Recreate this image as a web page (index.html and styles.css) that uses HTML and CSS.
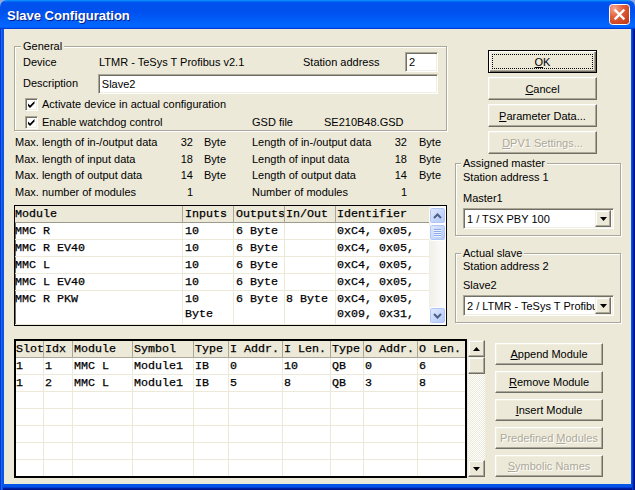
FILE: index.html
```html
<!DOCTYPE html>
<html>
<head>
<meta charset="utf-8">
<title>Slave Configuration</title>
<link rel="stylesheet" href="styles.css">
</head>
<body>
<div class="window">
  <div class="titlebar">
    <span class="title">Slave Configuration</span>
    <span class="close">
      <svg width="21" height="21" viewBox="0 0 21 21">
        <defs>
          <radialGradient id="cg" cx="0.25" cy="0.2" r="0.95">
            <stop offset="0" stop-color="#F4A88E"/>
            <stop offset="0.45" stop-color="#E25E3A"/>
            <stop offset="1" stop-color="#C23A18"/>
          </radialGradient>
        </defs>
        <rect x="0.5" y="0.5" width="20" height="20" rx="3" fill="url(#cg)" stroke="#fff"/>
        <path d="M6.5 6.5L14.5 14.5M14.5 6.5L6.5 14.5" stroke="#fff" stroke-width="2.4" stroke-linecap="square"/>
      </svg>
    </span>
  </div>
  <div class="frame">
    <div class="client">
      <div class="top">
        <div class="leftcol">
          <div class="group general">
            <span class="legend">General</span>
            <div class="grow">
              <span class="g-lbl">Device</span>
              <span class="g-val">LTMR - TeSys T Profibus v2.1</span>
              <span class="g-st">Station address</span>
              <span class="field st-field">2</span>
            </div>
            <div class="grow second">
              <span class="g-lbl2">Description</span>
              <span class="field desc-field">Slave2</span>
            </div>
            <div class="crow first">
              <span class="chk"><svg width="9" height="9" viewBox="0 0 9 9"><path d="M1 3.5L3 5.5L7.5 1V3.5L3 8L1 6Z" fill="#000"/></svg></span>
              <span>Activate device in actual configuration</span>
            </div>
            <div class="crow">
              <span class="chk"><svg width="9" height="9" viewBox="0 0 9 9"><path d="M1 3.5L3 5.5L7.5 1V3.5L3 8L1 6Z" fill="#000"/></svg></span>
              <span class="wd">Enable watchdog control</span>
              <span class="gsd">GSD file</span>
              <span>SE210B48.GSD</span>
            </div>
          </div>

          <div class="stats">
            <span>Max. length of in-/output data</span><span class="n">32</span><span class="by">Byte</span>
            <span>Length of in-/output data</span><span class="n">32</span><span class="by2">Byte</span>
            <span>Max. length of input data</span><span class="n">18</span><span class="by">Byte</span>
            <span>Length of input data</span><span class="n">18</span><span class="by2">Byte</span>
            <span>Max. length of output data</span><span class="n">14</span><span class="by">Byte</span>
            <span>Length of output data</span><span class="n">14</span><span class="by2">Byte</span>
            <span>Max. number of modules</span><span class="n">1</span><span class="by"></span>
            <span>Number of modules</span><span class="n">1</span><span class="by2"></span>
          </div>

          <div class="list">
            <div class="lv">
              <div class="lr lh"><span>Module</span><span>Inputs</span><span>Outputs</span><span>In/Out</span><span>Identifier</span></div>
              <div class="lr"><span>MMC R</span><span>10</span><span>6 Byte</span><span></span><span>0xC4, 0x05,</span></div>
              <div class="lr"><span>MMC R EV40</span><span>10</span><span>6 Byte</span><span></span><span>0xC4, 0x05,</span></div>
              <div class="lr"><span>MMC L</span><span>10</span><span>6 Byte</span><span></span><span>0xC4, 0x05,</span></div>
              <div class="lr"><span>MMC L EV40</span><span>10</span><span>6 Byte</span><span></span><span>0xC4, 0x05,</span></div>
              <div class="lr tall"><span>MMC R PKW</span><span>10<br>Byte</span><span>6 Byte</span><span>8 Byte</span><span>0xC4, 0x05,<br>0x09, 0x31,</span></div>
            </div>
            <div class="xps">
              <div class="xb"><svg width="9" height="6" viewBox="0 0 9 6"><path d="M1 5L4.5 1.5L8 5" fill="none" stroke="#4D6185" stroke-width="2"/></svg></div>
              <div class="xb thumb"><span></span><span></span><span></span><span></span></div>
              <div class="xtrack"></div>
              <div class="xb"><svg width="9" height="6" viewBox="0 0 9 6"><path d="M1 1L4.5 4.5L8 1" fill="none" stroke="#4D6185" stroke-width="2"/></svg></div>
            </div>
          </div>
        </div>

        <div class="rightcol">
          <div class="btns">
            <div class="btn default"><span class="focus"><u>O</u>K</span></div>
            <div class="btn"><span><u>C</u>ancel</span></div>
            <div class="btn"><span><u>P</u>arameter Data...</span></div>
            <div class="btn disabled"><span><u>D</u>PV1 Settings...</span></div>
          </div>
          <div class="group side master">
            <span class="legend">Assigned master</span>
            <div class="sline">Station address 1</div>
            <div class="sline l2">Master1</div>
            <div class="combo">
              <span class="ctext">1 / TSX PBY 100</span>
              <span class="cbtn"><svg width="7" height="4" viewBox="0 0 7 4"><path d="M0 0H7L3.5 4Z" fill="#000"/></svg></span>
            </div>
          </div>
          <div class="group side slave">
            <span class="legend">Actual slave</span>
            <div class="sline">Station address 2</div>
            <div class="sline l2">Slave2</div>
            <div class="combo">
              <span class="ctext">2 / LTMR - TeSys T Profibus v2.1</span>
              <span class="cbtn"><svg width="7" height="4" viewBox="0 0 7 4"><path d="M0 0H7L3.5 4Z" fill="#000"/></svg></span>
            </div>
          </div>
        </div>
      </div>

      <div class="bottom">
        <div class="grid">
          <div class="gr gh"><span>Slot</span><span>Idx</span><span>Module</span><span>Symbol</span><span>Type</span><span>I Addr.</span><span>I Len.</span><span>Type</span><span>O Addr.</span><span>O Len.</span></div>
          <div class="gr"><span>1</span><span>1</span><span>MMC L</span><span>Module1</span><span>IB</span><span>0</span><span>10</span><span>QB</span><span>0</span><span>6</span></div>
          <div class="gr"><span>1</span><span>2</span><span>MMC L</span><span>Module1</span><span>IB</span><span>5</span><span>8</span><span>QB</span><span>3</span><span>8</span></div>
          <div class="gr"><span></span><span></span><span></span><span></span><span></span><span></span><span></span><span></span><span></span><span></span></div>
          <div class="gr"><span></span><span></span><span></span><span></span><span></span><span></span><span></span><span></span><span></span><span></span></div>
          <div class="gr"><span></span><span></span><span></span><span></span><span></span><span></span><span></span><span></span><span></span><span></span></div>
          <div class="gr"><span></span><span></span><span></span><span></span><span></span><span></span><span></span><span></span><span></span><span></span></div>
          <div class="gr"><span></span><span></span><span></span><span></span><span></span><span></span><span></span><span></span><span></span><span></span></div>
        </div>
        <div class="cscroll">
          <div class="cb"><svg width="7" height="4" viewBox="0 0 7 4"><path d="M3.5 0L7 4H0Z" fill="#000"/></svg></div>
          <div class="cb"></div>
          <div class="ctrack"></div>
          <div class="cb"><svg width="7" height="4" viewBox="0 0 7 4"><path d="M0 0H7L3.5 4Z" fill="#000"/></svg></div>
        </div>
        <div class="btns2">
          <div class="btn"><span><u>A</u>ppend Module</span></div>
          <div class="btn"><span><u>R</u>emove Module</span></div>
          <div class="btn"><span><u>I</u>nsert Module</span></div>
          <div class="btn disabled"><span>Predefined <u>M</u>odules</span></div>
          <div class="btn disabled"><span><u>S</u>ymbolic Names</span></div>
        </div>
      </div>
    </div>
  </div>
</div>
</body>
</html>
```

FILE: styles.css
```css
* { box-sizing: border-box; margin: 0; padding: 0; }
html, body { width: 635px; height: 490px; overflow: hidden; }
body {
  background: #8FA9E0;
  font: 11px "Liberation Sans", Arial, sans-serif;
  color: #000;
}
u { text-decoration: underline; text-underline-offset: 1px; }

.window { width: 635px; height: 490px; display: flex; flex-direction: column; }

.titlebar {
  height: 29px;
  flex: none;
  display: flex;
  align-items: center;
  justify-content: space-between;
  padding: 0 5px 0 7px;
  border-radius: 7px 7px 0 0;
  background: linear-gradient(180deg, #0997ff, #0053ee 8%, #0050ee 40%, #06f 88%, #06f 93%, #005bff 95%, #003dd7 96%, #003dd7);
}
.title {
  color: #fff;
  font: bold 13px "Liberation Sans", Arial, sans-serif;
  text-shadow: 1px 1px #0A1E8C;
  margin-top: 1px;
}
.close { display: flex; width: 21px; height: 21px; }

.frame {
  flex: 1;
  display: flex;
  padding: 0 4px 6px;
  background: #0556E6;
  box-shadow: inset 1px 0 #0831D9, inset 2px 0 #166AEE, inset 3px 0 #0855DD,
              inset -1px 0 #00138C, inset -2px 0 #001EA0, inset -3px 0 #003BDA,
              inset 0 -1px #00138C, inset 0 -2px #001EA0, inset 0 -3px #003BDA;
}
.client {
  flex: 1;
  background: #ECE9D8;
  display: flex;
  flex-direction: column;
}

/* ---------- top section ---------- */
.top { display: flex; padding-left: 10px; }
.leftcol { width: 434px; padding-top: 17px; display: flex; flex-direction: column; }
.rightcol { width: 166px; margin-left: 7px; padding-top: 21px; display: flex; flex-direction: column; }

.group {
  position: relative;
  border: 1px solid #ACA899;
  box-shadow: inset 1px 1px #fff, 1px 1px #fff;
}
.legend {
  position: absolute;
  top: -7px;
  left: 5px;
  padding: 0 2px;
  line-height: 13px;
  background: #ECE9D8;
}

.general { width: 433px; height: 85px; padding: 5px 8px 0 8px; }
.general .legend { left: 6px; }
.grow { display: flex; align-items: center; height: 20px; }
.grow.second { margin-top: 1px; }
.g-lbl { width: 76px; }
.g-val { width: 204px; }
.g-st { width: 102px; }
.g-lbl2 { width: 75px; }
.field {
  height: 20px;
  display: flex;
  align-items: center;
  padding: 0 3px;
  background: #fff;
  border: 1px solid;
  border-color: #ACA899 #fff #fff #ACA899;
  box-shadow: inset 1px 1px #716F64, inset -1px -1px #F1EFE2;
}
.st-field { width: 33px; }
.desc-field { width: 341px; margin-top: 1px; }

.crow { display: flex; align-items: center; height: 16px; margin-top: 2px; padding-left: 2px; }
.crow.first { margin-top: 3px; }
.chk {
  width: 13px; height: 13px;
  display: flex; align-items: center; justify-content: center;
  background: #fff;
  border: 1px solid;
  border-color: #ACA899 #fff #fff #ACA899;
  box-shadow: inset 1px 1px #716F64, inset -1px -1px #F1EFE2;
  margin-right: 4px;
}
.wd { width: 210px; }
.gsd { width: 72px; }

.stats {
  margin-top: 3px;
  padding-left: 1px;
  display: grid;
  grid-template-columns: 160px 18px 59px 137px 18px auto;
  grid-auto-rows: 16.5px;
  align-items: center;
}
.stats .n { text-align: right; }
.stats .by { padding-left: 11px; }
.stats .by2 { padding-left: 12px; }

.mono {
  font-family: "Liberation Mono", "Courier New", monospace;
}

.list {
  margin-top: 5px;
  width: 433px;
  height: 121px;
  display: flex;
  border: 1px solid #000;
  box-shadow: inset 1px 1px #716F64;
  background: #fff;
  overflow: hidden;
}
.lv {
  width: 414px;
  overflow: hidden;
  font: 11.67px "Liberation Mono", "Courier New", monospace;
  -webkit-text-stroke: 0.25px #000;
}
.lr { display: grid; grid-template-columns: 168px 51px 51px 51px 93px; height: 17px; }
.lr span {
  border-right: 1px solid #ECE9D8;
  border-bottom: 1px solid #ECE9D8;
  padding: 1px 0 0 0;
  line-height: 15px;
  white-space: nowrap;
  overflow: hidden;
}
.lr span:nth-child(2), .lr span:nth-child(3) { padding-left: 2px; }
.lr span:nth-child(4), .lr span:nth-child(5) { padding-left: 1px; }
.lr span:last-child { border-right: none; }
.lr.lh { background: #ECE9D8; }
.lr.lh span { border-right-color: #ACA899; border-bottom-color: #9D9A8C; }
.lr.tall { height: 34px; }

.xps {
  width: 17px;
  display: flex;
  flex-direction: column;
  padding: 1px 0;
  background: linear-gradient(90deg, #F0EFE9, #FDFDFB);
}
.xb {
  height: 17px;
  flex: none;
  display: flex;
  align-items: center;
  justify-content: center;
  border: 1px solid #fff;
  border-radius: 3px;
  background: linear-gradient(135deg, #E3EBFE, #C3D4FC 60%, #B5C9F7);
  box-shadow: inset 0 0 0 1px #B0C6F4;
}
.xb.thumb { flex-direction: column; gap: 1px; }
.xb.thumb span { width: 7px; height: 1px; background: #8BA8EC; box-shadow: 0 1px #EEF3FE; }
.xtrack { flex: 1; }

/* right column */
.btns { display: flex; flex-direction: column; gap: 4px; margin-left: 33px; width: 109px; }
.btn {
  height: 23px;
  display: flex;
  align-items: center;
  justify-content: center;
  background: #ECE9D8;
  border: 1px solid;
  border-color: #fff #716F64 #716F64 #fff;
  box-shadow: inset -1px -1px #ACA899, inset 1px 1px #F1EFE2;
  white-space: nowrap;
}
.btn.default {
  border-color: #000;
  padding: 3px;
  box-shadow: inset 1px 1px #fff, inset -1px -1px #716F64, inset -2px -2px #ACA899, inset 2px 2px #F1EFE2;
}
.focus {
  flex: 1;
  align-self: stretch;
  display: flex;
  align-items: center;
  justify-content: center;
  border: 1px dotted #000;
}
.btn.disabled { color: #ACA899; text-shadow: 1px 1px #fff; }

.side { width: 166px; padding: 6px 6px 6px 7px; margin-top: 9px; }
.sline { line-height: 14px; height: 14px; }
.sline.l2 { margin-top: 7px; margin-bottom: 3px; }
.slave { margin-top: 17px; padding-top: 5px; }
.slave .sline.l2 { margin-top: 5px; }

.combo {
  width: 151px;
  height: 21px;
  display: flex;
  align-items: center;
  background: #fff;
  border: 1px solid;
  border-color: #ACA899 #fff #fff #ACA899;
  box-shadow: inset 1px 1px #716F64, inset -1px -1px #F1EFE2;
  padding: 2px;
}
.ctext { flex: 1; padding-left: 1px; white-space: nowrap; overflow: hidden; }
.cbtn {
  width: 16px;
  height: 17px;
  flex: none;
  display: flex;
  align-items: center;
  justify-content: center;
  background: #ECE9D8;
  border: 1px solid;
  border-color: #F1EFE2 #716F64 #716F64 #F1EFE2;
  box-shadow: inset -1px -1px #ACA899, inset 1px 1px #fff;
}

/* ---------- bottom section ---------- */
.bottom { display: flex; margin-top: 13px; padding-left: 10px; }
.grid {
  width: 453px;
  height: 139px;
  overflow: hidden;
  background: #fff;
  border: 2px solid #000;
  font: 11.67px "Liberation Mono", "Courier New", monospace;
  -webkit-text-stroke: 0.25px #000;
}
.gr { display: grid; grid-template-columns: 28px 29px 60px 61px 35px 54px 48px 33px 54px 47px; height: 17px; }
.gr span {
  border-right: 1px solid #ECE9D8;
  border-bottom: 1px solid #ECE9D8;
  padding: 1px 0 0 1px;
  line-height: 15px;
  white-space: nowrap;
  overflow: hidden;
}
.gr span:first-child { padding-left: 0; }
.gr span:last-child { border-right: none; }
.gr.gh { background: #ECE9D8; }
.gr.gh span { border-right-color: #ACA899; border-bottom-color: #ACA899; }

.cscroll {
  width: 17px;
  height: 137px;
  margin: 1px 0 0 1px;
  display: flex;
  flex-direction: column;
  background-color: #fff;
  background-image: repeating-conic-gradient(#ECE9D8 0 25%, #fff 0 50%);
  background-size: 2px 2px;
}
.cb {
  height: 17px;
  flex: none;
  display: flex;
  align-items: center;
  justify-content: center;
  background: #ECE9D8;
  border: 1px solid;
  border-color: #F1EFE2 #716F64 #716F64 #F1EFE2;
  box-shadow: inset -1px -1px #ACA899, inset 1px 1px #fff;
}
.ctrack { flex: 1; }

.btns2 { display: flex; flex-direction: column; gap: 6px; margin-left: 10px; padding-top: 4px; width: 108px; }
.btns2 .btn { height: 22px; }
```
